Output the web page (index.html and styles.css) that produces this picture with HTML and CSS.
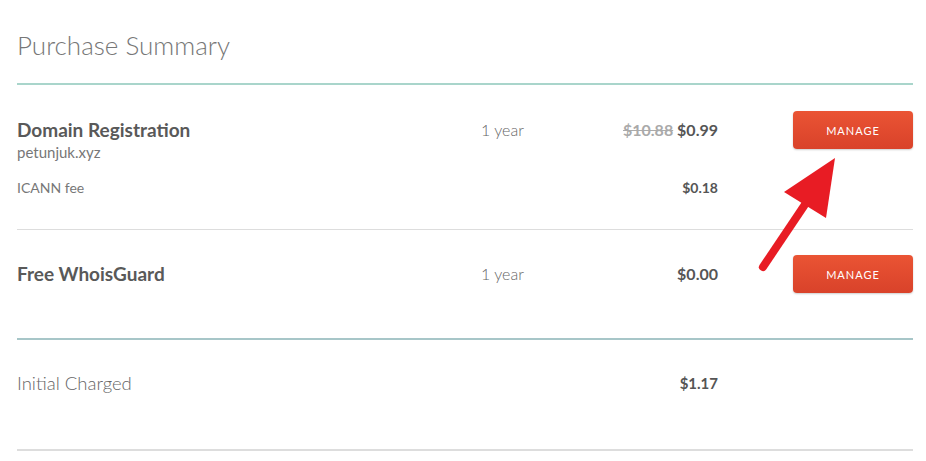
FILE: index.html
```html
<!DOCTYPE html>
<html lang="en">
<head>
    <meta charset="UTF-8">
    <meta name="viewport" content="width=device-width, initial-scale=1.0">
    <title>Purchase Summary</title>
    <link rel="stylesheet" href="styles.css">
</head>
<body>
    <div class="summary">
        <h2 class="summary-title">Purchase Summary</h2>

        <div class="item">
            <div class="item-row">
                <div class="item-name">
                    <div class="name">Domain Registration</div>
                    <div class="domain">petunjuk.xyz</div>
                </div>
                <div class="term">1 year</div>
                <div class="price"><s class="old-price">$10.88</s> $0.99</div>
                <div class="action"><button class="btn-manage">Manage</button></div>
            </div>
            <div class="item-row fee-row">
                <div class="fee-name">ICANN fee</div>
                <div></div>
                <div class="price fee-price">$0.18</div>
                <div></div>
            </div>
        </div>

        <div class="item item-last">
            <div class="item-row">
                <div class="item-name">
                    <div class="name">Free WhoisGuard</div>
                </div>
                <div class="term">1 year</div>
                <div class="price">$0.00</div>
                <div class="action"><button class="btn-manage">Manage</button></div>
            </div>
        </div>

        <div class="total">
            <div class="item-row">
                <div class="total-label">Initial Charged</div>
                <div></div>
                <div class="price total-price">$1.17</div>
                <div></div>
            </div>
        </div>

        <!-- pointer to the first manage button -->
        <svg class="pointer" width="100" height="135" viewBox="0 0 100 135">
            <line x1="21" y1="125" x2="66" y2="58" stroke="#e81c24" stroke-width="8" stroke-linecap="round"/>
            <polygon points="93,16 42,50 84,76" fill="#e81c24"/>
        </svg>
    </div>
</body>
</html>
```

FILE: styles.css
```css
body {
    margin: 0;
    background: #fff;
    font-family: Lato, "Open Sans", sans-serif;
    color: #555;
}
.summary {
    position: relative;
    width: 896px;
    margin-left: 17px;
}
.summary-title {
    margin: 0;
    padding: 30px 0 23px;
    font-size: 26px;
    line-height: 30px;
    font-weight: 300;
    color: #777;
    border-bottom: 2px solid #a9d5cb;
}
.item {
    padding: 26px 0 31px;
    border-bottom: 1px solid #ddd;
}
.item-last {
    padding: 25px 0 45px;
    border-bottom: 2px solid #a7c6c8;
}
.item-row {
    display: grid;
    grid-template-columns: 464px 120px 117px 195px;
    align-items: start;
}
.name {
    font-size: 19px;
    font-weight: 700;
    line-height: 38px;
    color: #595959;
}
.domain {
    margin-top: -5px;
    font-size: 15px;
    line-height: 16px;
    color: #777;
}
.term {
    font-size: 16px;
    font-weight: 300;
    line-height: 38px;
    color: #666;
}
.price {
    text-align: right;
    font-size: 16px;
    font-weight: 700;
    line-height: 38px;
    color: #555;
}
.old-price {
    color: #aaa;
    font-weight: 700;
}
.action {
    text-align: right;
}
.btn-manage {
    width: 120px;
    height: 38px;
    border: none;
    border-radius: 4px;
    background: linear-gradient(#ea5434, #d9422a);
    box-shadow: 0 1px 2px rgba(0, 0, 0, 0.2);
    color: #fff;
    font-family: Lato, sans-serif;
    font-size: 11px;
    letter-spacing: 1px;
    text-transform: uppercase;
    cursor: pointer;
}
.fee-row {
    margin-top: 18px;
}
.fee-name {
    font-size: 14px;
    line-height: 20px;
    color: #777;
}
.fee-price {
    font-size: 14px;
    line-height: 20px;
}
.total {
    padding: 24px 0 47px;
    border-bottom: 2px solid #ddd;
}
.total-label {
    font-size: 18.5px;
    font-weight: 300;
    line-height: 38px;
    color: #666;
}
.total-price {
    font-size: 15px;
}
.pointer {
    position: absolute;
    left: 725px;
    top: 142px;
}
```
